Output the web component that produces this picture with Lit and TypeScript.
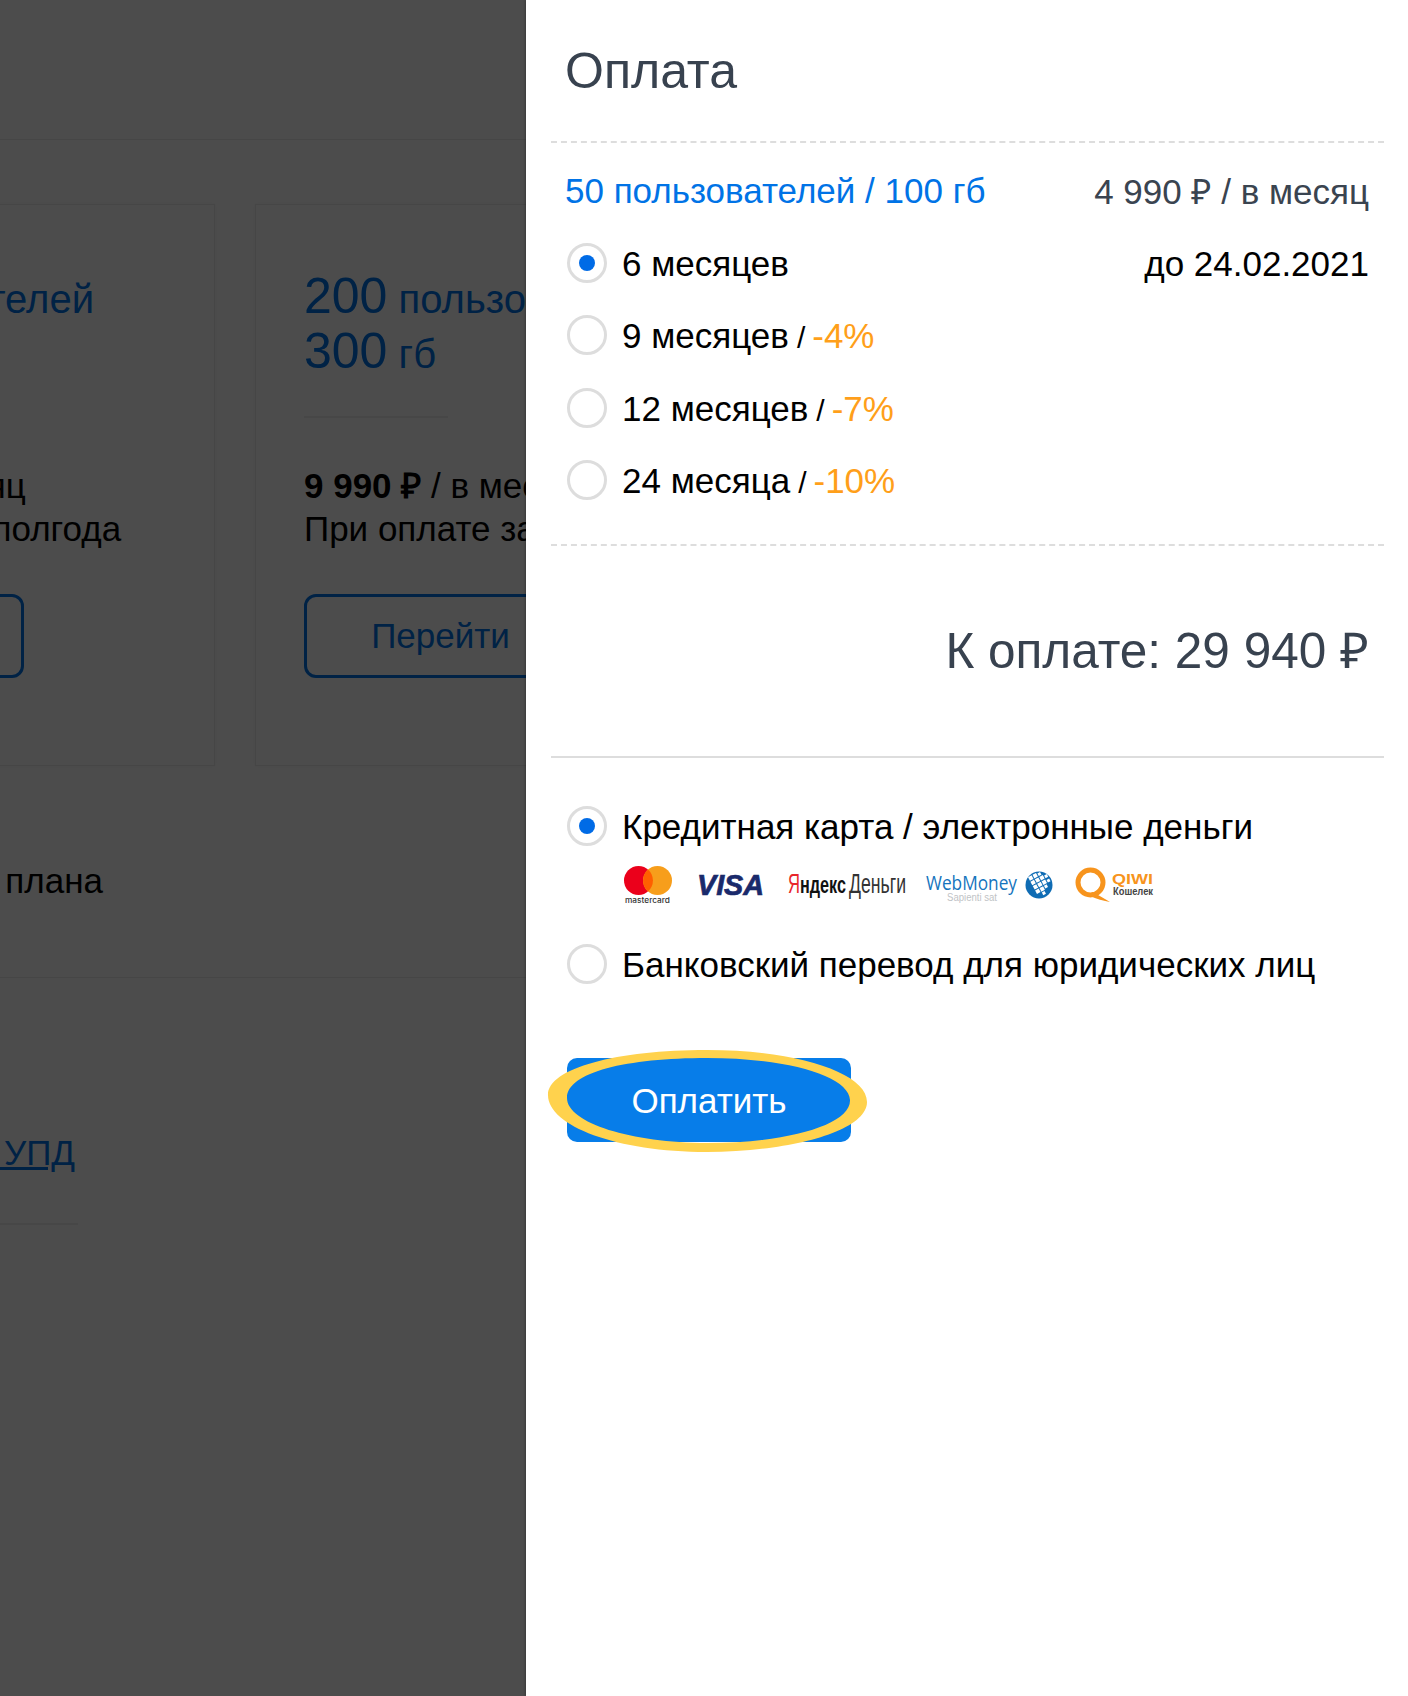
import { LitElement, html, css } from "lit";
import { customElement } from "lit/decorators.js";

const logos = html`
  <svg width="53" height="46" viewBox="624 860 53 46" aria-hidden="true">
    <circle cx="638.5" cy="880.5" r="14.5" fill="#eb001b"/>
    <circle cx="657.5" cy="880.5" r="14.5" fill="#f79e1b"/>
    <path d="M648 869.6a14.5 14.5 0 0 1 0 21.8a14.5 14.5 0 0 1 0-21.8z" fill="#ff5f00"/>
    <text x="625" y="903" font-family="Inter, 'Liberation Sans', sans-serif" font-size="7.5" font-weight="500" fill="#333" textLength="45" lengthAdjust="spacingAndGlyphs">mastercard</text>
  </svg>
  <svg width="71" height="46" viewBox="697 860 71 46" aria-hidden="true">
    <text x="697" y="895" font-family="'Liberation Sans', sans-serif" font-size="29" font-weight="700" font-style="italic" fill="#1a2a6b" stroke="#1a2a6b" stroke-width=".7" textLength="67" lengthAdjust="spacingAndGlyphs">VISA</text>
  </svg>
  <svg width="118" height="46" viewBox="788 860 118 46" aria-hidden="true">
    <text x="788" y="893" font-family="'Liberation Sans', sans-serif" font-size="27" fill="#e8262a" textLength="12" lengthAdjust="spacingAndGlyphs">Я</text>
    <text x="800" y="893" font-family="'Liberation Sans', sans-serif" font-size="24" font-weight="700" fill="#111" textLength="46" lengthAdjust="spacingAndGlyphs">ндекс</text>
    <text x="849" y="893" font-family="'Liberation Sans', sans-serif" font-size="27" fill="#333" textLength="57" lengthAdjust="spacingAndGlyphs">Деньги</text>
  </svg>
  <svg width="128" height="46" viewBox="926 860 128 46" aria-hidden="true">
    <text x="926" y="890" font-family="'Open Sans', 'Liberation Sans', sans-serif" font-size="19.5" fill="#1474bd" textLength="91" lengthAdjust="spacingAndGlyphs">WebMoney</text>
    <text x="947" y="901" font-family="'Liberation Sans', sans-serif" font-size="10" fill="#bfc3c6" textLength="50" lengthAdjust="spacingAndGlyphs">Sapienti sat</text>
    <circle cx="1039" cy="885" r="13.5" fill="#0f6cb4"/>
    <g fill="#fff" transform="rotate(-28 1039 885)">
      <rect x="1033" y="873" width="4" height="4"/><rect x="1038" y="873" width="4" height="4"/><rect x="1043" y="874" width="3" height="3"/>
      <rect x="1033" y="878" width="4" height="4"/><rect x="1038" y="878" width="4" height="4"/><rect x="1043" y="878" width="4" height="4"/><rect x="1048" y="879" width="3" height="3"/>
      <rect x="1033" y="883" width="4" height="4"/><rect x="1038" y="883" width="4" height="4"/><rect x="1043" y="883" width="4" height="4"/><rect x="1048" y="884" width="3" height="3"/>
      <rect x="1033" y="888" width="4" height="4"/><rect x="1038" y="888" width="4" height="4"/><rect x="1043" y="888" width="3" height="3"/>
      <rect x="1038" y="893" width="3" height="3"/>
    </g>
  </svg>
  <svg width="82" height="46" viewBox="1074 860 82 46" aria-hidden="true">
    <circle cx="1090.5" cy="882.5" r="12.5" fill="none" stroke="#f7941d" stroke-width="5"/>
    <path d="M1092 892c5 2 11 6 18 10c-6-1-14-3-20-6z" fill="#f7941d"/>
    <circle cx="1099" cy="891" r="2" fill="#f7941d"/>
    <text x="1112" y="884" font-family="'Liberation Sans', sans-serif" font-size="14" font-weight="700" fill="#f7941d" textLength="41" lengthAdjust="spacingAndGlyphs">QIWI</text>
    <text x="1113" y="895" font-family="'Liberation Sans', sans-serif" font-size="10" font-weight="700" fill="#444" textLength="40" lengthAdjust="spacingAndGlyphs">Кошелек</text>
  </svg>
`;

@customElement("app-root")
export class AppRoot extends LitElement {
  static styles = css`
    :host { display: block; font-family: "Liberation Sans", Arial, sans-serif; }
    .page { display: flex; width: 1408px; height: 1696px; overflow: hidden; background: #fff; }

    .under { position: relative; width: 526px; flex: none; overflow: hidden; color: #000; }
    .top { height: 139px; border-bottom: 1px solid #ececec; }
    .cards { display: flex; gap: 40px; margin: 64px 0 0 -298px; height: 562px; }
    .card { flex: none; width: 513px; box-sizing: border-box; padding: 66px 0 0 48px; border: 1px solid #ececec; box-shadow: 0 0 4px rgba(0,0,0,.05); }
    .plan { font-size: 40px; line-height: 53px; color: #0073e6; white-space: nowrap; }
    .plan b { font-weight: 400; font-size: 50px; line-height: 1; }
    .rule { width: 144px; height: 2px; background: #eee; margin: 35px 0 46px; }
    .price { font-size: 35px; line-height: 43px; white-space: nowrap; }
    .ghost { width: 273px; height: 84px; box-sizing: border-box; margin-top: 44px; border: 3px solid #0073e6; border-radius: 12px; color: #0073e6; font-size: 35px; display: flex; align-items: center; justify-content: center; }
    .clip { display: flex; justify-content: flex-end; white-space: nowrap; font-size: 35px; line-height: 40px; }
    .change { width: 103px; margin-top: 95px; }
    .sep1 { height: 1px; background: #ececec; margin-top: 76px; }
    .docs { width: 75px; margin-top: 155px; color: #0073e6; text-decoration: underline; }
    .sep2 { width: 78px; height: 2px; background: #eee; margin-top: 50px; }
    .shade { position: absolute; inset: 0; background: rgba(0,0,0,.7); }

    .panel { flex: 1; box-sizing: border-box; padding: 0 24px 0 25px; box-shadow: -1px 0 2px rgba(0,0,0,.25); position: relative; }
    .head { height: 143px; box-sizing: border-box; padding: 44px 14px 0; border-bottom: 2px dashed #ddd; }
    h1 { margin: 0; font-weight: 400; font-size: 50px; line-height: 54px; color: #38424f; }
    .plans { padding: 11px 15px 27px 16px; border-bottom: 2px dashed #ddd; }
    .row { display: flex; align-items: center; justify-content: space-between; height: 72.5px; font-size: 35px; color: #000; white-space: nowrap; }
    .nudge { padding-top: 2px; }
    .name { color: #0073e6; margin-left: -2px; }
    .cost { color: #3a4450; }
    .opt { display: flex; align-items: center; gap: 15px; }
    .radio { width: 40px; height: 40px; box-sizing: border-box; border: 3px solid #ddd; border-radius: 50%; display: flex; align-items: center; justify-content: center; background: #fff; flex: none; }
    .radio.on::after { content: ""; width: 16px; height: 16px; border-radius: 50%; background: #006be6; }
    .slash { margin-left: 8px; font-size: 30px; }
    .off { color: #ff9f1a; margin-left: 7px; }
    .total { height: 212px; box-sizing: border-box; display: flex; align-items: center; justify-content: flex-end; padding: 0 15px 4px 0; font-size: 49.5px; color: #38424f; border-bottom: 2px solid #ddd; }
    .pay { padding: 32px 0 0 16px; }
    .pay .row { height: 72px; }
    .logos { display: flex; gap: 20px; margin: -2px 0 22px 57px; height: 46px; }
    .logos svg { display: block; overflow: visible; flex: none; }
    .btn-wrap { position: relative; width: 284px; height: 84px; margin-top: 58px; }
    .btn { width: 100%; height: 100%; border: 0; border-radius: 10px; background: #077de9; color: #fff; font: 400 35px "Liberation Sans", Arial, sans-serif; padding: 2px 0 0; }
    .mark { position: absolute; left: -20px; top: -10px; pointer-events: none; }
  `;

  private opt(on: boolean, label: unknown) {
    return html`<div class="opt"><span class=${on ? "radio on" : "radio"}></span><span class="nudge">${label}</span></div>`;
  }

  render() {
    return html`
      <div class="page">
        <section class="under">
          <div class="top"></div>
          <div class="cards">
            <div class="card">
              <div class="plan"><b>50</b> пользователей<br /><b>100</b> гб</div>
              <div class="rule"></div>
              <div class="price"><strong>4 990 ₽</strong> / в месяц<br />При оплате за полгода</div>
              <div class="ghost">Перейти</div>
            </div>
            <div class="card">
              <div class="plan"><b>200</b> пользователей<br /><b>300</b> гб</div>
              <div class="rule"></div>
              <div class="price"><strong>9 990 ₽</strong> / в месяц<br />При оплате за полгода</div>
              <div class="ghost">Перейти</div>
            </div>
          </div>
          <div class="clip change"><span>Смена тарифного плана</span></div>
          <div class="sep1"></div>
          <div class="clip docs"><span>Счёт, акт, УПД</span></div>
          <div class="sep2"></div>
          <div class="shade"></div>
        </section>
        <section class="panel">
          <div class="head"><h1>Оплата</h1></div>
          <div class="plans">
            <div class="row"><span class="name nudge">50 пользователей / 100 гб</span><span class="cost">4 990 ₽ / в месяц</span></div>
            <div class="row">${this.opt(true, "6 месяцев")}<span class="nudge">до 24.02.2021</span></div>
            <div class="row">${this.opt(false, html`9 месяцев<span class="slash">/</span><span class="off">-4%</span>`)}</div>
            <div class="row">${this.opt(false, html`12 месяцев<span class="slash">/</span><span class="off">-7%</span>`)}</div>
            <div class="row">${this.opt(false, html`24 месяца<span class="slash">/</span><span class="off">-10%</span>`)}</div>
          </div>
          <div class="total">К оплате: 29 940 ₽</div>
          <div class="pay">
            <div class="row">${this.opt(true, "Кредитная карта / электронные деньги")}</div>
            <div class="logos">${logos}</div>
            <div class="row">${this.opt(false, "Банковский перевод для юридических лиц")}</div>
            <div class="btn-wrap">
              <button class="btn">Оплатить</button>
              <svg class="mark" width="324" height="106" viewBox="0 0 324 106" aria-hidden="true">
                <path fill-rule="evenodd" fill="#ffd24d" d="M160 2C250 2 320 25 320 54C320 84 240 104 160 104C70 104 1 78 1 47C1 20 70 2 160 2ZM160 10C80 10 20 24 20 50C20 75 85 95 160 95C240 95 304 77 303 52C302 28 240 10 160 10Z"/>
              </svg>
            </div>
          </div>
        </section>
      </div>
    `;
  }
}
